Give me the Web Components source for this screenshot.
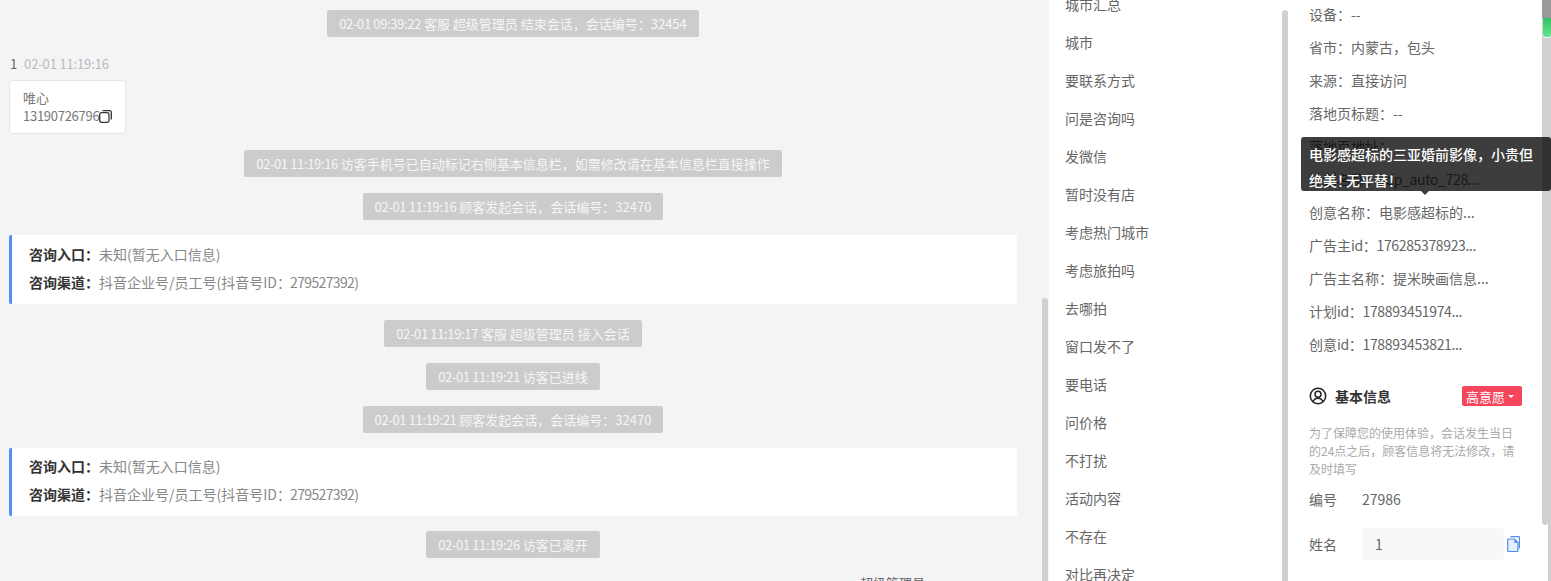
<!DOCTYPE html>
<html lang="zh">
<head>
<meta charset="utf-8">
<title>会话详情</title>
<style>
  html, body { margin: 0; height: 100%; overflow: hidden; background: #f3f4f6; }
  body { font-family: "Noto Sans CJK SC", "Liberation Sans", sans-serif; }
</style>
</head>
<body>
<session-view>
  <chat-pane slot="chat">
    <sys-pill time="02-01 09:39:22">客服 超级管理员 结束会话，会话编号：32454</sys-pill>
    <visitor-msg name="1" time="02-01 11:19:16" style="margin-top:2px">
      <span>唯心</span>
      <span>13190726796</span>
    </visitor-msg>
    <sys-pill time="02-01 11:19:16">访客手机号已自动标记右侧基本信息栏，如需修改请在基本信息栏直接操作</sys-pill>
    <sys-pill time="02-01 11:19:16">顾客发起会话，会话编号：32470</sys-pill>
    <entry-card style="margin-top:-1px;height:69px"></entry-card>
    <sys-pill time="02-01 11:19:17">客服 超级管理员 接入会话</sys-pill>
    <sys-pill time="02-01 11:19:21">访客已进线</sys-pill>
    <sys-pill time="02-01 11:19:21">顾客发起会话，会话编号：32470</sys-pill>
    <entry-card style="margin-top:-1px"></entry-card>
    <sys-pill time="02-01 11:19:26" style="margin-top:-1px">访客已离开</sys-pill>
    <agent-name>超级管理员</agent-name>
  </chat-pane>
  <tag-list slot="tags">
    <li>城市汇总</li><li>城市</li><li>要联系方式</li><li>问是咨询吗</li><li>发微信</li>
    <li>暂时没有店</li><li>考虑热门城市</li><li>考虑旅拍吗</li><li>去哪拍</li><li>窗口发不了</li>
    <li>要电话</li><li>问价格</li><li>不打扰</li><li>活动内容</li><li>不存在</li><li>对比再决定</li>
  </tag-list>
  <detail-panel slot="detail">
    <info-row>设备：--</info-row>
    <info-row>省市：内蒙古，包头</info-row>
    <info-row>来源：直接访问</info-row>
    <info-row>落地页标题：--</info-row>
    <info-row>落地页地址：</info-row>
    <info-row>计划名称：<span>cdp_auto_728...</span></info-row>
    <info-row>创意名称：电影感超标的...</info-row>
    <info-row>广告主<span>id：176285378923...</span></info-row>
    <info-row>广告主名称：提米映画信息...</info-row>
    <info-row>计划<span>id：178893451974...</span></info-row>
    <info-row>创意<span>id：178893453821...</span></info-row>
    <basic-info></basic-info>
  </detail-panel>
</session-view>

<script>
class SessionView extends HTMLElement {
  constructor() {
    super()
    this.attachShadow({mode: 'open'})
  }
  connectedCallback() {
    this.shadowRoot.innerHTML = `
    <style>
      :host { display: flex; position: relative; width: 1551px; height: 581px; overflow: hidden; background: #f3f4f6; }
      .chat { width: 1049px; flex: none; height: 100%; overflow: hidden; position: relative; }
      .tags { width: 240px; flex: none; height: 100%; overflow: hidden; position: relative; background: #fff; }
      .detail { flex: 1; height: 100%; overflow: hidden; position: relative; background: #fff; }
      .thumb { position: absolute; width: 6px; background: #d0d0d0; border-radius: 3px 3px 0 0; }
      .chat .thumb { left: 1042px; top: 298px; bottom: 0; }
      .tags .thumb { left: 233px; top: 10px; bottom: 0; }
      .detail .thumb { left: 253px; top: 0; height: 525px; border-radius: 0 0 3px 3px; }
      .edge { position: absolute; left: 259px; top: 0; bottom: 0; width: 3px; background: #d0d0d0; }
      .edge-top { position: absolute; left: 253px; top: 0; width: 9px; height: 18px; background: #9a9a9a; }
      .meter { position: absolute; left: 254px; top: 18px; width: 8px; height: 19px; border-radius: 0 0 3px 3px;
        background: linear-gradient(#34bf62, #63e88e); box-shadow: 0 1px 0 #fff; }
      .tip { position: absolute; left: 12px; top: 137px; width: 234px; padding: 4px 8px; height: 46px;
        background: rgba(0, 0, 0, .76); border-radius: 3px; color: #fff; font-size: 14px; line-height: 26px; font-weight: 500; }
      .tip::after { content: ""; position: absolute; left: 120px; top: 54px; border: 4px solid transparent;
        border-top-color: #3d3d3d; border-bottom: 0; }
      .tip i { font-style: normal; margin-right: -5px; }
    </style>
    <div class="chat"><slot name="chat"></slot><div class="thumb"></div></div>
    <div class="tags"><slot name="tags"></slot><div class="thumb"></div></div>
    <div class="detail">
      <slot name="detail"></slot>
      <div class="thumb"></div><div class="edge"></div><div class="edge-top"></div><div class="meter"></div>
      <div class="tip">电影感超标的三亚婚前影像，小贵但绝美<i>！</i>无平替<i>！</i></div>
    </div>
    `
  }
}

class ChatPane extends HTMLElement {
  constructor() {
    super()
    this.attachShadow({mode: 'open'})
  }
  connectedCallback() {
    this.shadowRoot.innerHTML = `
    <style>
      :host { display: flex; flex-direction: column; gap: 16px; width: 1008px; padding: 10px 0 0 9px; }
    </style>
    <slot></slot>
    `
  }
}

class SysPill extends HTMLElement {
  constructor() {
    super()
    this.attachShadow({mode: 'open'})
  }
  connectedCallback() {
    this.shadowRoot.innerHTML = `
    <style>
      :host { display: block; align-self: center; flex: none; height: 27px; padding: 0 12px; background: #cccccc;
        border-radius: 2px; color: #f6f6f6; font-size: 13px; line-height: 27px; white-space: nowrap; }
      span { letter-spacing: -.36px; }
    </style>
    <span>${this.getAttribute('time')}</span> <slot></slot>
    `
  }
}

class VisitorMsg extends HTMLElement {
  constructor() {
    super()
    this.attachShadow({mode: 'open'})
  }
  connectedCallback() {
    const name = this.getAttribute('name')
    const time = this.getAttribute('time')
    this.shadowRoot.innerHTML = `
    <style>
      :host { display: block; flex: none; align-self: flex-start; }
      .head { height: 18px; line-height: 18px; font-size: 13px; color: #bbb; margin-bottom: 7px; padding-left: 1px; letter-spacing: -.15px; }
      .head b { font-weight: 400; color: #666; margin-right: 7px; }
      .bubble { display: flex; flex-direction: column; justify-content: center; width: 102px; height: 52px; padding-left: 13px;
        border: 1px solid #e6e6e6; border-radius: 4px; background: #fff; color: #777; font-size: 13px; line-height: 18px; }
      .phone { display: flex; align-items: center; letter-spacing: -.27px; }
      svg { width: 13px; height: 13px; flex: none; }
    </style>
    <div class="head"><b>${name}</b>${time}</div>
    <div class="bubble">
      <div>${this.children[0].textContent}</div>
      <div class="phone">${this.children[1].textContent}
        <svg viewBox="0 0 13 13" fill="none" stroke="#333" stroke-width="1.300">
          <rect x=".7" y="2.700" width="9.300" height="9.600" rx="1.800"/>
          <path d="M3.500.7h7.300a1.500 1.500 0 0 1 1.500 1.500v7.300"/>
        </svg>
      </div>
    </div>
    `
  }
}

class EntryCard extends HTMLElement {
  constructor() {
    super()
    this.attachShadow({mode: 'open'})
  }
  connectedCallback() {
    this.shadowRoot.innerHTML = `
    <style>
      :host { display: flex; flex-direction: column; justify-content: center; flex: none; box-sizing: border-box; height: 68px; padding: 0 0 4px 17px;
        background: #fff; border-left: 3px solid #5590ee; border-radius: 2px 0 0 2px; font-size: 14px; line-height: 28px; color: #888; }
      b { display: inline-block; width: 70px; font-weight: 700; color: #333; }
      span { letter-spacing: -.65px; margin-left: -4px; }
    </style>
    <div><b>咨询入口：</b>未知(暂无入口信息)</div>
    <div><b>咨询渠道：</b>抖音企业号/员工号(抖音号ID： <span>279527392)</span></div>
    `
  }
}

class AgentName extends HTMLElement {
  constructor() {
    super()
    this.attachShadow({mode: 'open'})
  }
  connectedCallback() {
    this.shadowRoot.innerHTML = `
    <style>
      :host { display: block; flex: none; align-self: flex-end; margin-right: 92px; font-size: 13px; line-height: 18px; color: #666; }
    </style>
    <slot></slot>
    `
  }
}

class TagList extends HTMLElement {
  constructor() {
    super()
    this.attachShadow({mode: 'open'})
  }
  connectedCallback() {
    this.shadowRoot.innerHTML = `
    <style>
      :host { display: flex; flex-direction: column; margin-top: -15px; padding-left: 16px; font-size: 14px; line-height: 38px; color: #666; }
      ::slotted(li) { list-style: none; height: 38px; flex: none; }
    </style>
    <slot></slot>
    `
  }
}

class InfoRow extends HTMLElement {
  constructor() {
    super()
    this.attachShadow({mode: 'open'})
  }
  connectedCallback() {
    this.shadowRoot.innerHTML = `
    <style>
      :host { display: block; height: 33px; line-height: 33px; font-size: 14px; color: #666; white-space: nowrap; }
      ::slotted(span) { letter-spacing: -.35px; }
    </style>
    <slot></slot>
    `
  }
}

class DetailPanel extends HTMLElement {
  constructor() {
    super()
    this.attachShadow({mode: 'open'})
  }
  connectedCallback() {
    this.shadowRoot.innerHTML = `
    <style>
      :host { display: block; margin-top: -2px; padding-left: 20px; }
    </style>
    <slot></slot>
    `
  }
}

class BasicInfo extends HTMLElement {
  constructor() {
    super()
    this.attachShadow({mode: 'open'})
  }
  connectedCallback() {
    this.shadowRoot.innerHTML = `
    <style>
      :host { display: block; width: 213px; padding-top: 25px; font-size: 14px; color: #666; }
      .title { display: flex; align-items: center; height: 20px; font-weight: 700; color: #333; }
      .title svg { width: 18px; height: 18px; margin-right: 8px; }
      .badge { display: flex; align-items: center; gap: 3px; box-sizing: border-box; width: 60px; margin-left: auto; height: 20px; padding: 0 4px; border-radius: 2px;
        background: #f6465c; color: #fff; font-size: 13px; font-weight: 400; }
      .badge i { border: 3.5px solid transparent; border-top-color: #fff; border-bottom: 0; margin-top: 1px; }
      .note { margin: 18px 0 0; font-size: 12px; line-height: 18px; color: #aaa; width: 210px; }
      .field { display: flex; align-items: center; }
      .field span { width: 53px; flex: none; }
      .id { margin-top: 10px; height: 22px; }
      .name { margin-top: 18px; height: 32px; }
      .input { width: 129px; height: 32px; line-height: 32px; padding-left: 13px; background: #f8f8f8; border-radius: 2px; }
      .name svg { width: 13px; height: 16px; margin: 0 0 0 3px; flex: none; }
    </style>
    <div class="title">
      <svg viewBox="0 0 18 18" fill="none" stroke="#222" stroke-width="1.500">
        <circle cx="9" cy="9" r="7.700"/>
        <circle cx="9" cy="7.200" r="3"/>
        <path d="M3.900 14.600c1-2.300 2.900-3.400 5.100-3.400s4.100 1.100 5.100 3.400"/>
      </svg>
      基本信息
      <div class="badge">高意愿<i></i></div>
    </div>
    <p class="note">为了保障您的使用体验，会话发生当日的24点之后，顾客信息将无法修改，请及时填写</p>
    <div class="field id"><span>编号</span>27986</div>
    <div class="field name"><span>姓名</span><div class="input">1</div>
      <svg viewBox="0 0 13 16">
        <path d="M3.500.7h8a1 1 0 0 1 1 1v10.500" fill="none" stroke="#4f8be8" stroke-width="1.200"/>
        <path d="M1.700 3h5.800l3.500 3.500v8a1 1 0 0 1-1 1h-8.300a1 1 0 0 1-1-1v-10.500a1 1 0 0 1 1-1z" fill="#e4eefc" stroke="#4f8be8" stroke-width="1.200"/>
        <path d="M7.300 3v3.700h3.700z" fill="#4f8be8"/>
      </svg>
    </div>
    `
  }
}

customElements.define('session-view', SessionView)
customElements.define('chat-pane', ChatPane)
customElements.define('sys-pill', SysPill)
customElements.define('visitor-msg', VisitorMsg)
customElements.define('entry-card', EntryCard)
customElements.define('agent-name', AgentName)
customElements.define('tag-list', TagList)
customElements.define('info-row', InfoRow)
customElements.define('detail-panel', DetailPanel)
customElements.define('basic-info', BasicInfo)
</script>
</body>
</html>
